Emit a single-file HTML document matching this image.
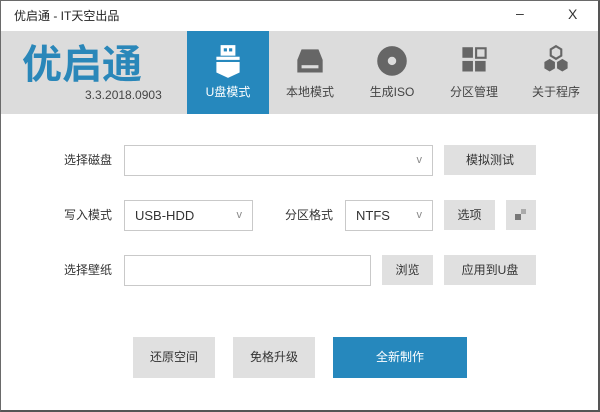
<!DOCTYPE html>
<html><head><meta charset="utf-8"><style>
*{margin:0;padding:0;box-sizing:border-box}
body{width:600px;height:412px;overflow:hidden;background:#fff;font-family:"Liberation Sans","Noto Sans CJK SC",sans-serif;font-size:12px;color:#333;position:relative}
.a{position:absolute}
.frame{position:absolute;left:0;top:0;width:600px;height:412px;border:1px solid #6a6a6a;border-right:2px solid #555;border-bottom:2px solid #555;pointer-events:none}
.hdr{left:0;top:31px;width:600px;height:83px;background:#dcdcdc}
.tab{top:31px;width:82px;height:83px;text-align:center;color:#444;font-size:12px}
.tab .t{position:absolute;left:0;width:100%;top:52px}
.tab svg{position:absolute;left:24px;top:12px}
.box{border:1px solid #c9c9c9;background:#fff;height:31px}
.btn{background:#e0e0e0;text-align:center;line-height:30px;height:30px;color:#333}
.lbl{line-height:30px}
.arr{position:absolute;right:10px;top:0;line-height:29px;color:#888;font-size:11px}
</style></head><body>
<div class="a" style="left:14px;top:7px;font-size:12px;color:#222">优启通 - IT天空出品</div>
<div class="a" style="left:516px;top:5px;font-size:14px;color:#333">–</div>
<div class="a" style="left:568px;top:6px;font-size:14px;color:#333">X</div>
<div class="a hdr"></div>
<div class="a" style="left:22px;top:42px;font-size:40px;font-weight:bold;color:#2a87b9;line-height:46px">优启通</div>
<div class="a" style="left:85px;top:88px;font-size:12px;color:#444">3.3.2018.0903</div>

<div class="a tab" style="left:187px;background:#2688bd;color:#fff">
<svg width="34" height="38" viewBox="0 0 32 36"><rect x="9" y="2" width="14" height="10" fill="#fff"/><rect x="12" y="5" width="3" height="3" fill="#2688bd"/><rect x="17" y="5" width="3" height="3" fill="#2688bd"/><rect x="5" y="13" width="22" height="3" fill="#fff"/><path d="M5 18H27V28L16 33L5 28Z" fill="#fff"/></svg>
<div class="t">U盘模式</div></div>
<div class="a tab" style="left:269px">
<svg width="34" height="38" viewBox="0 0 32 36"><path d="M8 6H24L28 16V28H4V16Z" fill="#666"/><rect x="8" y="21" width="16" height="3" fill="#dcdcdc"/></svg>
<div class="t">本地模式</div></div>
<div class="a tab" style="left:351px">
<svg width="34" height="38" viewBox="0 0 32 36"><circle cx="16" cy="17" r="14" fill="#666"/><circle cx="16" cy="17" r="4" fill="#dcdcdc"/></svg>
<div class="t">生成ISO</div></div>
<div class="a tab" style="left:433px">
<svg width="34" height="38" viewBox="0 0 32 36"><rect x="5" y="4" width="10" height="10" fill="#666"/><rect x="18" y="5" width="9" height="9" fill="none" stroke="#666" stroke-width="2"/><rect x="5" y="17" width="10" height="10" fill="#666"/><rect x="17" y="17" width="10" height="10" fill="#666"/></svg>
<div class="t">分区管理</div></div>
<div class="a tab" style="left:515px">
<svg width="34" height="38" viewBox="0 0 32 36"><path d="M16 3L21 6V12L16 15L11 12V6Z" fill="none" stroke="#666" stroke-width="2"/><path d="M10 15L15 18V24L10 27L5 24V18Z" fill="#666"/><path d="M22 15L27 18V24L22 27L17 24V18Z" fill="#666"/></svg>
<div class="t">关于程序</div></div>

<div class="a lbl" style="left:64px;top:145px">选择磁盘</div>
<div class="a box" style="left:124px;top:145px;width:309px"><span class="arr">v</span></div>
<div class="a btn" style="left:444px;top:145px;width:92px">模拟测试</div>

<div class="a lbl" style="left:64px;top:200px">写入模式</div>
<div class="a box" style="left:124px;top:200px;width:129px;line-height:29px;padding-left:10px;font-size:13px">USB-HDD<span class="arr">v</span></div>
<div class="a lbl" style="left:285px;top:200px">分区格式</div>
<div class="a box" style="left:345px;top:200px;width:88px;line-height:29px;padding-left:10px;font-size:13px">NTFS<span class="arr">v</span></div>
<div class="a btn" style="left:444px;top:200px;width:51px">选项</div>
<div class="a btn" style="left:506px;top:200px;width:30px"><div class="a" style="left:9px;top:14px;width:6px;height:6px;background:#777"></div><div class="a" style="left:15px;top:9px;width:5px;height:5px;background:#aaa"></div></div>

<div class="a lbl" style="left:64px;top:255px">选择壁纸</div>
<div class="a box" style="left:124px;top:255px;width:247px"></div>
<div class="a btn" style="left:382px;top:255px;width:51px">浏览</div>
<div class="a btn" style="left:444px;top:255px;width:92px">应用到U盘</div>

<div class="a btn" style="left:133px;top:337px;width:82px;height:41px;line-height:40px">还原空间</div>
<div class="a btn" style="left:233px;top:337px;width:82px;height:41px;line-height:40px">免格升级</div>
<div class="a btn" style="left:333px;top:337px;width:134px;height:41px;line-height:40px;background:#2688bd;color:#fff">全新制作</div>
<div class="frame"></div>
</body></html>
